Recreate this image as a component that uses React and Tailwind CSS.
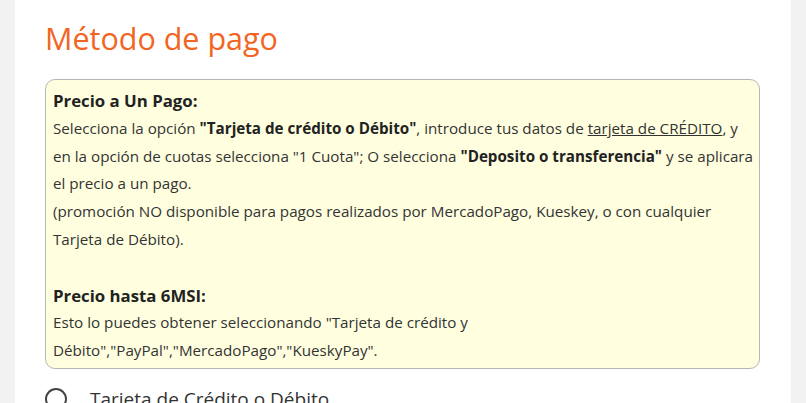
export default function App() {
  return (
    <div className="min-h-screen bg-[#f2f2f2] font-['Open_Sans',sans-serif]">
      <div className="mx-[15px] h-[403px] overflow-hidden bg-white px-[30px] pt-[18px]">
        <h1 className="text-[30.5px] leading-[40px] text-[#f26522]">Método de pago</h1>

        <div className="mt-[21px] w-[715px] rounded-[10px] border border-[#b5b5b5] bg-[#ffffe0] pb-[3px] pl-[7px] pr-[3px] pt-[7px] text-[15.2px] leading-[27.8px] text-[#333]">
          <p className="text-[16.8px] font-bold text-[#222]">Precio a Un Pago:</p>
          <p>
            Selecciona la opción <b className="text-[#222]">"Tarjeta de crédito o Débito"</b>, introduce tus datos de{' '}
            <u>tarjeta de CRÉDITO</u>, y en la opción de cuotas selecciona "1 Cuota"; O selecciona{' '}
            <b className="text-[#222]">"Deposito o transferencia"</b> y se aplicara el precio a un pago.
          </p>
          <p>
            (promoción NO disponible para pagos realizados por MercadoPago, Kueskey, o con cualquier Tarjeta de Débito).
          </p>
          <p className="mt-[27.8px] text-[16.8px] font-bold text-[#222]">Precio hasta 6MSI:</p>
          <p className="w-[450px]">
            Esto lo puedes obtener seleccionando "Tarjeta de crédito y Débito","PayPal","MercadoPago","KueskyPay".
          </p>
        </div>

        <label className="mt-[16px] flex items-center gap-[23px] text-[19px] text-[#333]">
          <span className="h-[22px] w-[22px] shrink-0 rounded-full border-2 border-[#444]" />
          Tarjeta de Crédito o Débito
        </label>
      </div>
    </div>
  )
}
